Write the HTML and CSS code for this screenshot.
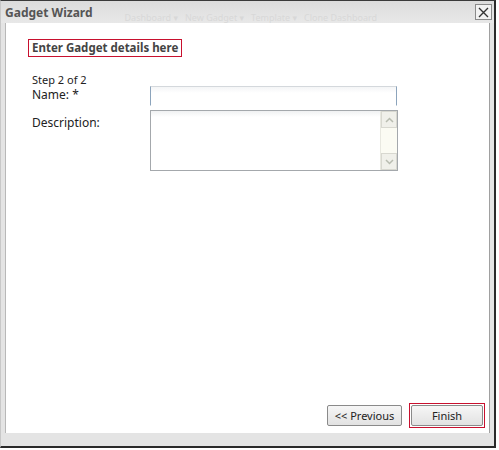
FILE: index.html
```html
<!DOCTYPE html>
<html>
<head>
<meta charset="utf-8">
<link rel="stylesheet" href="styles.css">
</head>
<body>
<div class="dialog">
  <div class="titlebar">
    <span class="title">Gadget Wizard</span>
    <span class="ghost">Dashboard &#9662; &nbsp; New Gadget &#9662; &nbsp; Template &#9662; &nbsp; Clone Dashboard</span>
    <button class="close" aria-label="Close">
      <svg width="11" height="11" viewBox="0 0 11 11"><path d="M1 1L10 10M10 1L1 10" stroke="#333" stroke-width="1.4"/></svg>
    </button>
  </div>
  <div class="body">
    <div class="content">
      <div class="heading">Enter Gadget details here</div>
      <div class="step">Step 2 of 2</div>
      <div class="row">
        <label class="lbl">Name: *</label>
        <input class="name" type="text">
      </div>
      <div class="row">
        <label class="lbl">Description:</label>
        <div class="area">
          <div class="scroll">
            <span class="arrow up"><svg width="9" height="6" viewBox="0 0 9 6"><path d="M1 5L4.5 1.5L8 5" fill="none" stroke="#b8bcb0" stroke-width="1.5"/></svg></span>
            <span class="track"></span>
            <span class="arrow down"><svg width="9" height="6" viewBox="0 0 9 6"><path d="M1 1L4.5 4.5L8 1" fill="none" stroke="#b8bcb0" stroke-width="1.5"/></svg></span>
          </div>
        </div>
      </div>
      <div class="spacer"></div>
      <div class="actions">
        <button class="btn prev">&lt;&lt; Previous</button>
        <span class="focus"><button class="btn finish">Finish</button></span>
      </div>
    </div>
  </div>
  <div class="footer"></div>
</div>
</body>
</html>
```

FILE: styles.css
```css
html, body {
  margin: 0;
  padding: 0;
  background: #ffffff;
}
body {
  font-family: "Noto Sans", "DejaVu Sans", sans-serif;
  font-size: 11px;
  color: #222;
}
.dialog {
  width: 496px;
  height: 448px;
  box-sizing: border-box;
  border-top: 1px solid #3a3a3a;
  border-right: 2px solid #2a2a2a;
  border-bottom: 2px solid #2a2a2a;
  border-left: 1px solid #c8c8c8;
  background: #e4e4e4;
  display: flex;
  flex-direction: column;
}
.titlebar {
  height: 22px;
  display: flex;
  align-items: center;
  padding-left: 4px;
  padding-right: 2px;
  background: linear-gradient(#dcdcdc, #e8e8e8);
}
.title {
  font-weight: bold;
  font-size: 12px;
  color: #555;
}
.ghost {
  margin-left: 32px;
  align-self: flex-end;
  font-size: 9px;
  line-height: 10px;
  color: #d8d8d8;
  white-space: nowrap;
  flex: 1;
}
.close {
  width: 17px;
  height: 16px;
  margin: 0;
  padding: 0;
  border: 1px solid #8a8a8a;
  background: #f2f2f2;
  display: flex;
  align-items: center;
  justify-content: center;
}
.body {
  flex: 1;
  display: flex;
  padding-left: 4px;
  padding-right: 4px;
  background: #e4e4e4;
}
.content {
  flex: 1;
  background: #fff;
  border-left: 1px solid #b8b8b8;
  border-right: 1px solid #a0a0a0;
  display: flex;
  flex-direction: column;
  padding: 16px 4px 4px 22px;
}
.heading {
  align-self: flex-start;
  border: 1px solid #c8102e;
  padding: 0 3px 0 3px;
  font-weight: bold;
  font-size: 11.5px;
  line-height: 16px;
  color: #444;
}
.step {
  margin-top: 16px;
  margin-left: 4px;
  line-height: 14px;
}
.row {
  display: flex;
  align-items: flex-start;
}
.lbl {
  width: 118px;
  margin-left: 4px;
  font-size: 12px;
  color: #222;
  line-height: 15px;
}
.name {
  margin: -1px 0 0 0;
  width: 247px;
  height: 20px;
  box-sizing: border-box;
  border: 1px solid #d4d8dc;
  border-left-color: #8ca4bc;
  border-right-color: #8ca4bc;
  border-bottom-color: #fff;
  background: linear-gradient(#f4f5f6, #fff 6px);
  padding: 0;
}
.row + .row {
  margin-top: 4px;
}
.row + .row .lbl { margin-top: 5px; }
.area {
  width: 248px;
  height: 61px;
  box-sizing: border-box;
  border: 1px solid #a4a8ac;
  background: linear-gradient(#f0f1f2, #fff 6px);
  display: flex;
  justify-content: flex-end;
}
.scroll {
  width: 16px;
  display: flex;
  flex-direction: column;
  background: #fbfbf3;
  border-left: 1px solid #e8e8e0;
}
.arrow {
  height: 15px;
  display: flex;
  align-items: center;
  justify-content: center;
  background: #f0f0ea;
  border: 1px solid #d8d8d0;
}
.track { flex: 1; }
.spacer { flex: 1; }
.actions {
  display: flex;
  justify-content: flex-end;
  align-items: center;
  gap: 7px;
  padding-bottom: 1px;
}
.btn {
  font-family: "Noto Sans", "DejaVu Sans", sans-serif;
  font-size: 11px;
  color: #222;
  height: 21px;
  padding: 0 5px;
  border: 1px solid #8a8a8a;
  border-radius: 2px;
  background: linear-gradient(#f6f6f6, #e2e2e2);
}
.prev {
  width: 75px;
  padding: 0;
}
.focus {
  display: inline-flex;
  border: 1px solid #c8102e;
  padding: 1px;
}
.finish {
  width: 72px;
}
.footer {
  height: 13px;
  background: #e4e4e4;
}
```
